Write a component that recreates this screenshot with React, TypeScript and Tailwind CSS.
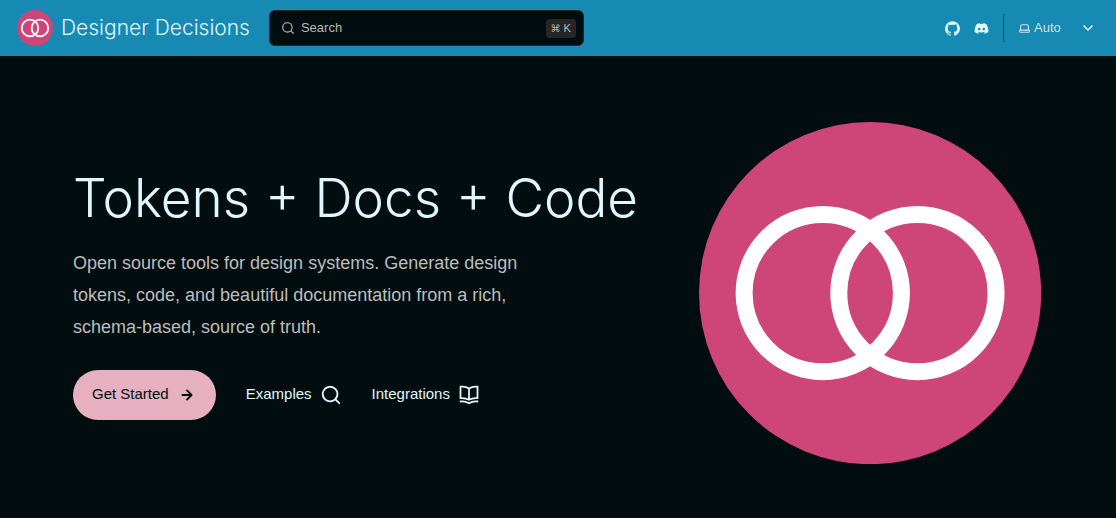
import type { ReactNode } from "react";
import { FaDiscord } from "react-icons/fa6";

const paths = {
  search:
    "M21.71 20.29 18 16.61A9 9 0 1 0 16.61 18l3.68 3.68a.999.999 0 0 0 1.42 0 1 1 0 0 0 0-1.39ZM11 18a7 7 0 1 1 0-14 7 7 0 0 1 0 14Z",
  arrow:
    "M17.92 11.62a1.001 1.001 0 0 0-.21-.33l-5-5a1.003 1.003 0 1 0-1.42 1.42l3.3 3.29H7a1 1 0 0 0 0 2h7.59l-3.3 3.29a1.002 1.002 0 0 0 .325 1.639 1 1 0 0 0 1.095-.219l5-5a1 1 0 0 0 .21-.33 1 1 0 0 0 0-.76Z",
  caret:
    "M17 9.17a1 1 0 0 0-1.41 0L12 12.71 8.46 9.17a1 1 0 1 0-1.41 1.42l4.24 4.24a1.002 1.002 0 0 0 1.42 0L17 10.59a1.002 1.002 0 0 0 0-1.42Z",
  laptop:
    "M21 14h-1V7a3 3 0 0 0-3-3H7a3 3 0 0 0-3 3v7H3a1 1 0 0 0-1 1v2a3 3 0 0 0 3 3h14a3 3 0 0 0 3-3v-2a1 1 0 0 0-1-1ZM6 7a1 1 0 0 1 1-1h10a1 1 0 0 1 1 1v7H6V7Zm14 10a1 1 0 0 1-1 1H5a1 1 0 0 1-1-1v-1h16v1Z",
  github:
    "M12 .3a12 12 0 0 0-3.8 23.38c.6.12.83-.26.83-.57L9 21.07c-3.34.72-4.04-1.61-4.04-1.61-.55-1.39-1.34-1.76-1.34-1.76-1.08-.74.09-.73.09-.73 1.2.09 1.83 1.24 1.83 1.24 1.08 1.83 2.81 1.3 3.5 1 .1-.78.42-1.31.76-1.61-2.67-.3-5.47-1.33-5.47-5.93 0-1.31.47-2.38 1.24-3.22-.14-.3-.54-1.52.1-3.18 0 0 1-.32 3.3 1.23a11.5 11.5 0 0 1 6 0c2.28-1.55 3.29-1.23 3.29-1.23.64 1.66.24 2.88.12 3.18a4.65 4.65 0 0 1 1.23 3.22c0 4.61-2.8 5.63-5.48 5.92.42.36.81 1.1.81 2.22l-.01 3.29c0 .31.2.69.82.57A12 12 0 0 0 12 .3Z",
};

function Icon({ name, className }: { name: keyof typeof paths; className: string }) {
  return (
    <svg viewBox="0 0 24 24" fill="currentColor" aria-hidden="true" className={`shrink-0 ${className}`}>
      <path d={paths[name]} />
    </svg>
  );
}

function BookIcon() {
  return (
    <svg
      viewBox="0 0 22 22"
      fill="none"
      stroke="currentColor"
      strokeWidth="1.8"
      strokeLinecap="round"
      strokeLinejoin="round"
      aria-hidden="true"
      className="size-[22px] shrink-0"
    >
      <path d="M11 4.4C8.5 2.8 5.5 2.3 2.5 2.7V14.2C5.5 13.9 8.5 14.4 11 15.8C13.5 14.4 16.5 13.9 19.5 14.2V2.7C16.5 2.3 13.5 2.8 11 4.4ZM11 4.4V15.8" />
      <path d="M2.5 17.5C5.5 17.2 8.5 17.7 11 19.3C13.5 17.7 16.5 17.2 19.5 17.5" />
    </svg>
  );
}

function Logo({ className }: { className: string }) {
  return (
    <svg viewBox="0 0 342 342" aria-hidden="true" className={className}>
      <circle cx="171" cy="171" r="171" fill="#ce4578" />
      <g fill="none" stroke="#fff" strokeWidth="17">
        <circle cx="123.7" cy="171" r="78.6" />
        <circle cx="218.3" cy="171" r="78.6" />
      </g>
    </svg>
  );
}

function TextLink({ href, children }: { href: string; children: ReactNode }) {
  return (
    <a href={href} className="flex items-center gap-2 text-[#e0f7fd]">
      {children}
    </a>
  );
}

export default function App() {
  return (
    <div className="flex min-h-screen flex-col bg-[#020d0f] font-['Liberation_Sans',Arial,sans-serif] text-[#e0f7fd]">
      <header className="flex h-14 items-center justify-between bg-[#168ab2] pl-[17px] pr-[17px]">
        <div className="flex items-center gap-[19px]">
          <a href="#home" className="flex items-center gap-2 whitespace-nowrap font-['Inter',sans-serif] text-[21px] font-light">
            <Logo className="size-9" />
            Designer Decisions
          </a>
          <button
            type="button"
            className="flex h-9 w-[315px] items-center gap-1.5 rounded-md border border-[#262626] bg-[#020d0f] pl-[11px] pr-[7px] text-[13px] text-[#b8b8b8]"
          >
            <Icon name="search" className="size-[14px]" />
            <span>Search</span>
            <kbd className="ml-auto flex h-[19px] items-center gap-[3px] rounded bg-[#262626] px-[5px] font-['Liberation_Sans',sans-serif] text-[11px]">
              <span className="font-['DejaVu_Sans',sans-serif] text-[10px]">⌘</span>
              <span>K</span>
            </kbd>
          </button>
        </div>
        <div className="flex items-center">
          <div className="flex h-7 items-center gap-3.5 border-r border-[#123848] pr-3.5">
            <a href="#github" aria-label="GitHub">
              <Icon name="github" className="size-[15px]" />
            </a>
            <a href="#discord" aria-label="Discord">
              <FaDiscord className="size-[15px]" />
            </a>
          </div>
          <label className="ml-3.5 flex items-center gap-[3px] text-[13px] text-[#d8dfe2]">
            <Icon name="laptop" className="size-[13px]" />
            <select aria-label="Select theme" defaultValue="Auto" className="w-10 appearance-none bg-transparent">
              <option>Auto</option>
              <option>Dark</option>
              <option>Light</option>
            </select>
            <Icon name="caret" className="size-[22px]" />
          </label>
        </div>
      </header>
      <main className="grid grow grid-cols-[7fr_4fr] items-center gap-[27px] pb-[54px] pl-[73px] pr-[75px] pt-[66px]">
        <div className="flex min-w-0 flex-col pb-0.5">
          <h1 className="whitespace-nowrap font-['Inter',sans-serif] text-[53px] font-light leading-[66px]">
            Tokens + Docs + Code
          </h1>
          <p className="mt-4 max-w-[480px] text-lg leading-8 text-[#bdbdbd]">
            Open source tools for design systems. Generate design tokens, code, and beautiful documentation from a rich,
            schema-based, source of truth.
          </p>
          <div className="mt-[27px] flex items-center gap-[30px] text-[15px]">
            <a
              href="#start"
              className="flex h-[50px] items-center gap-[7px] rounded-full bg-[#e6b0c1] pl-[19px] pr-[18px] text-[#020d0f]"
            >
              Get Started
              <Icon name="arrow" className="size-[22px]" />
            </a>
            <TextLink href="#examples">
              Examples
              <Icon name="search" className="size-[22px]" />
            </TextLink>
            <TextLink href="#integrations">
              Integrations
              <BookIcon />
            </TextLink>
          </div>
        </div>
        <Logo className="w-full" />
      </main>
    </div>
  );
}
